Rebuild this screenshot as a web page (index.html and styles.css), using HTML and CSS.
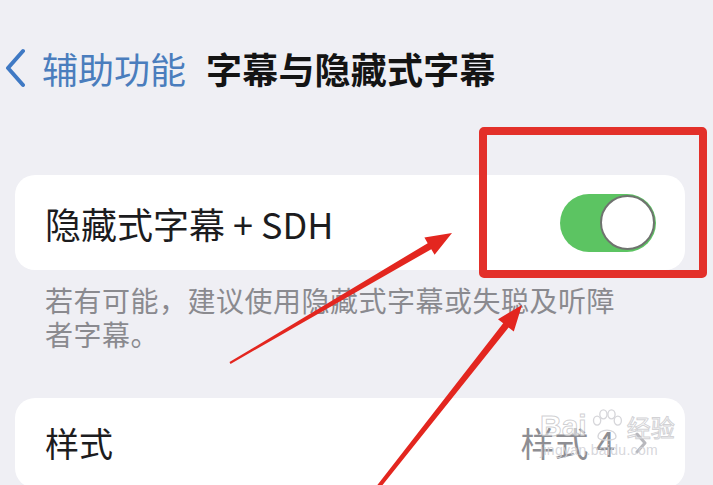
FILE: index.html
```html
<!DOCTYPE html>
<html lang="zh-CN">
<head>
<meta charset="utf-8">
<title>字幕与隐藏式字幕</title>
<link rel="stylesheet" href="styles.css">
</head>
<body>
<div class="screen">
  <header class="nav">
    <svg class="chev" viewBox="0 0 20 40" aria-hidden="true"><path d="M18 3 L3 20 L18 37" fill="none" stroke="#3f79c4" stroke-width="4" stroke-linecap="round" stroke-linejoin="round"/></svg>
    <span class="back">辅助功能</span>
    <h1 class="title">字幕与隐藏式字幕</h1>
  </header>

  <section class="group group-first">
    <div class="row">
      <span class="label">隐藏式字幕 + SDH</span>
      <div class="toggle"><div class="thumb"></div></div>
    </div>
  </section>

  <p class="footnote">若有可能，建议使用隐藏式字幕或失聪及听障者字幕。</p>

  <section class="group group-second">
    <div class="row">
      <span class="label">样式</span>
      <span class="value">样式 4<svg class="disclosure" viewBox="0 0 12 22" aria-hidden="true"><path d="M2 2 L10 11 L2 20" fill="none" stroke="#b8b8bd" stroke-width="3" stroke-linecap="round" stroke-linejoin="round"/></svg></span>
    </div>
  </section>

  <div class="highlight"></div>

  <svg class="arrows" viewBox="0 0 713 485" aria-hidden="true">
    <polygon points="230.5,363.9 431.3,249.2 434.6,254.8 452,233 424.4,237.6 427.7,243.2 229.5,362.1" fill="#e3261f"/>
    <polygon points="377.6,491.2 508.6,327.6 513.8,331.6 522,305 498,319.2 503.2,323.2 374.4,488.8" fill="#e3261f"/>
  </svg>

  <div class="watermark">
    <div class="wm-top">
      <span class="wm-bai">Bai</span>
      <svg class="wm-paw" viewBox="0 0 40 40" aria-hidden="true">
        <g fill="none" stroke="#d6d6da" stroke-width="1.5">
          <ellipse cx="9" cy="14" rx="4" ry="5"/>
          <ellipse cx="16" cy="7" rx="4" ry="5"/>
          <ellipse cx="25" cy="7" rx="4" ry="5"/>
          <ellipse cx="32" cy="14" rx="4" ry="5"/>
          <path d="M10 32 C10 22 30 22 30 32 C30 37 10 37 10 32 Z"/>
        </g>
      </svg>
      <span class="wm-jy">经验</span>
    </div>
    <div class="wm-url">jingyan.baidu.com</div>
  </div>
</div>
</body>
</html>
```

FILE: styles.css
```css
html, body {
  margin: 0;
  padding: 0;
}

body {
  background: #efeff4;
  font-family: "Noto Sans CJK SC", "Noto Sans", sans-serif;
  color: #1c1c1e;
}

.screen {
  position: relative;
  width: 713px;
  height: 485px;
  overflow: hidden;
}

.nav {
  display: flex;
  align-items: center;
  height: 50px;
  padding: 43px 0 0 5px;
}

.chev {
  width: 20px;
  height: 40px;
  margin-right: 17px;
  flex: none;
}

.back {
  font-size: 36px;
  line-height: 50px;
  color: #4a7dbd;
}

.title {
  margin: 0 0 0 20px;
  font-size: 36px;
  line-height: 50px;
  font-weight: 700;
  letter-spacing: 0.2px;
  color: #141414;
}

.group {
  margin: 0 28px 0 15px;
  background: #ffffff;
  border-radius: 20px;
}

.group-first {
  margin-top: 82px;
}

.group-second {
  margin-top: 47px;
}

.row {
  display: flex;
  align-items: center;
  justify-content: space-between;
  height: 95px;
  padding: 0 29px 0 30px;
}

.group-second .row {
  height: 90px;
  padding-right: 38px;
}

.label {
  font-size: 36px;
  line-height: 42px;
  color: #1c1c1e;
}

.group-second .label {
  font-size: 34px;
}

.toggle {
  display: flex;
  justify-content: flex-end;
  align-items: center;
  width: 96px;
  height: 58px;
  padding: 0 1px;
  box-sizing: border-box;
  border-radius: 29px;
  background: #5cc462;
}

.thumb {
  width: 55px;
  height: 55px;
  box-sizing: border-box;
  border-radius: 50%;
  background: #ffffff;
  border: 2.5px solid #6f736f;
}

.footnote {
  margin: 13px 0 0 45px;
  width: 590px;
  font-size: 28px;
  line-height: 34px;
  letter-spacing: 0.5px;
  color: #8a8a8f;
}

.value {
  display: flex;
  align-items: center;
  font-size: 34px;
  line-height: 42px;
  color: #8e8e93;
}

.disclosure {
  width: 12px;
  height: 22px;
  margin-left: 20px;
}

.highlight {
  position: absolute;
  left: 479px;
  top: 127px;
  width: 228px;
  height: 151px;
  box-sizing: border-box;
  border: 8px solid #e3302a;
  border-radius: 5px;
}

.arrows {
  position: absolute;
  left: 0;
  top: 0;
  width: 713px;
  height: 485px;
}

.watermark {
  position: absolute;
  left: 540px;
  top: 408px;
  color: rgba(255, 255, 255, 0.55);
}

.wm-top {
  display: flex;
  align-items: center;
  gap: 2px;
}

.wm-bai {
  font-family: "Liberation Sans", sans-serif;
  font-size: 30px;
  font-weight: 700;
  -webkit-text-stroke: 1px rgba(150, 150, 155, 0.45);
}

.wm-paw {
  width: 36px;
  height: 36px;
}

.wm-jy {
  font-size: 24px;
  color: rgba(255, 255, 255, 0.6);
  -webkit-text-stroke: 1px rgba(190, 190, 195, 0.7);
}

.wm-url {
  margin-top: -2px;
  font-family: "Liberation Sans", sans-serif;
  font-size: 14px;
  color: rgba(210, 210, 215, 0.9);
  letter-spacing: 0.3px;
}
```
